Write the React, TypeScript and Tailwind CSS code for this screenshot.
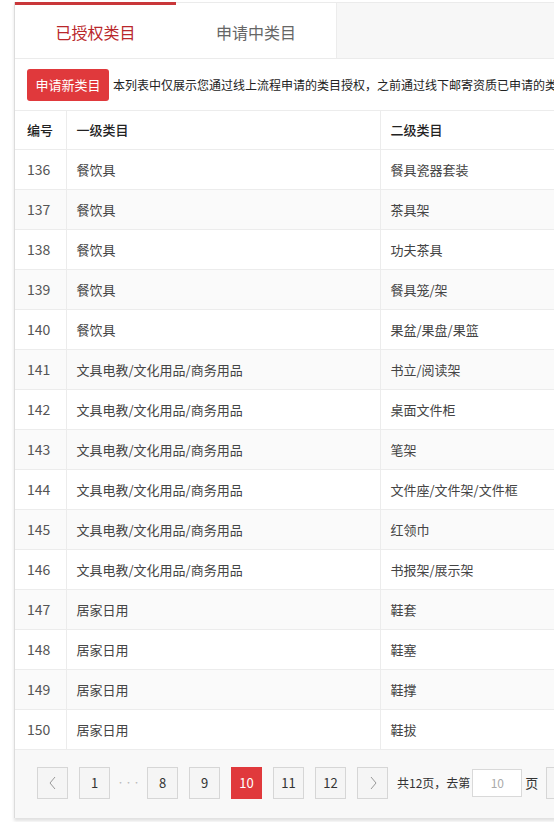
import React from 'react';

const rows: [number, string, string][] = [
  [136, '餐饮具', '餐具瓷器套装'],
  [137, '餐饮具', '茶具架'],
  [138, '餐饮具', '功夫茶具'],
  [139, '餐饮具', '餐具笼/架'],
  [140, '餐饮具', '果盆/果盘/果篮'],
  [141, '文具电教/文化用品/商务用品', '书立/阅读架'],
  [142, '文具电教/文化用品/商务用品', '桌面文件柜'],
  [143, '文具电教/文化用品/商务用品', '笔架'],
  [144, '文具电教/文化用品/商务用品', '文件座/文件架/文件框'],
  [145, '文具电教/文化用品/商务用品', '红领巾'],
  [146, '文具电教/文化用品/商务用品', '书报架/展示架'],
  [147, '居家日用', '鞋套'],
  [148, '居家日用', '鞋塞'],
  [149, '居家日用', '鞋撑'],
  [150, '居家日用', '鞋拔'],
];

const font = { fontFamily: '"Microsoft YaHei", "Noto Sans CJK SC", "Liberation Sans", sans-serif' };

function PageBtn({ children, active }: { children?: React.ReactNode; active?: boolean }) {
  return (
    <div
      className={`w-[31px] h-[32px] flex items-center justify-center text-[13px] border ${
        active ? 'bg-[#e0393c] border-[#e0393c] text-white' : 'bg-[#f5f5f5] border-[#d6d6d6] text-[#333]'
      }`}
    >
      {children}
    </div>
  );
}

export default function App() {
  return (
    <div className="w-[554px] h-[822px] overflow-hidden bg-white" style={font}>
      <div className="ml-[14px] mt-[2px] w-[720px] border-l border-[#dcdcdc] shadow-[0_3px_3px_rgba(0,0,0,0.12)]">
        {/* Tabs */}
        <div className="flex h-[57px] border-b border-[#ebebeb] bg-[#f7f7f7] border-t border-[#e6e6e6]">
          <div className="w-[161px] bg-white border-t-[3px] border-[#c9373a] flex items-center justify-center text-[16px] text-[#b9272b] -mt-px">
            已授权类目
          </div>
          <div className="w-[161px] bg-white border-r border-[#ececec] flex items-center justify-center text-[16px] text-[#666] pt-[2px]">
            申请中类目
          </div>
          <div className="flex-1" />
        </div>

        {/* Toolbar */}
        <div className="flex items-center h-[51px] pl-[12px] bg-white">
          <div className="h-[32px] w-[82px] bg-[#e0393c] rounded-[3px] text-white text-[13px] flex items-center justify-center">
            申请新类目
          </div>
          <span className="ml-[4px] text-[12px] text-[#222] whitespace-nowrap">
            本列表中仅展示您通过线上流程申请的类目授权，之前通过线下邮寄资质已申请的类目不在此列表中展示
          </span>
        </div>

        {/* Table */}
        <table className="w-full border-collapse text-[13px] table-fixed">
          <colgroup>
            <col className="w-[51px]" />
            <col className="w-[314px]" />
            <col />
          </colgroup>
          <thead>
            <tr className="h-[39px] border-t border-b border-[#ececec] bg-white">
              <th className="text-left font-medium text-[#222] pl-[12px] border-r border-[#ececec]">编号</th>
              <th className="text-left font-medium text-[#222] pl-[10px] border-r border-[#ececec]">一级类目</th>
              <th className="text-left font-medium text-[#222] pl-[10px]">二级类目</th>
            </tr>
          </thead>
          <tbody>
            {rows.map(([id, a, b], i) => (
              <tr key={id} className={`h-[40px] border-b border-[#ececec] ${i % 2 === 1 ? 'bg-[#fafafa]' : 'bg-white'}`}>
                <td className="pl-[12px] text-[#555] text-[14px] border-r border-[#ececec]">{id}</td>
                <td className="pl-[10px] text-[#444] border-r border-[#ececec]">{a}</td>
                <td className="pl-[10px] text-[#444]">{b}</td>
              </tr>
            ))}
          </tbody>
        </table>

        {/* Pagination */}
        <div className="h-[68px] bg-[#f8f8f8] flex items-center pl-[22px] pb-[3px] text-[13px] text-[#333]">
          <div className="flex items-center gap-[11px]">
            <PageBtn>
              <svg width="10" height="14" viewBox="0 0 10 14" fill="none" stroke="#999" strokeWidth="1">
                <path d="M7 1 L2 7 L7 13" />
              </svg>
            </PageBtn>
            <PageBtn>1</PageBtn>
            <span className="w-[15px] flex justify-center text-[#bbb] text-[8px] whitespace-nowrap">···</span>
            <PageBtn>8</PageBtn>
            <PageBtn>9</PageBtn>
            <PageBtn active>10</PageBtn>
            <PageBtn>11</PageBtn>
            <PageBtn>12</PageBtn>
            <PageBtn>
              <svg width="10" height="14" viewBox="0 0 10 14" fill="none" stroke="#999" strokeWidth="1">
                <path d="M3 1 L8 7 L3 13" />
              </svg>
            </PageBtn>
          </div>
          <span className="ml-[9px] whitespace-nowrap text-[12px]">共12页，去第</span>
          <div className="ml-[2px] w-[50px] h-[28px] bg-white border border-[#d9d9d9] flex items-center justify-center text-[#aaa] text-[12px]">
            10
          </div>
          <span className="ml-[3px] text-[13px]">页</span>
          <div className="ml-[8px] w-[40px] h-[32px] bg-[#f5f5f5] border border-[#d6d6d6]" />
        </div>
      </div>
    </div>
  );
}
